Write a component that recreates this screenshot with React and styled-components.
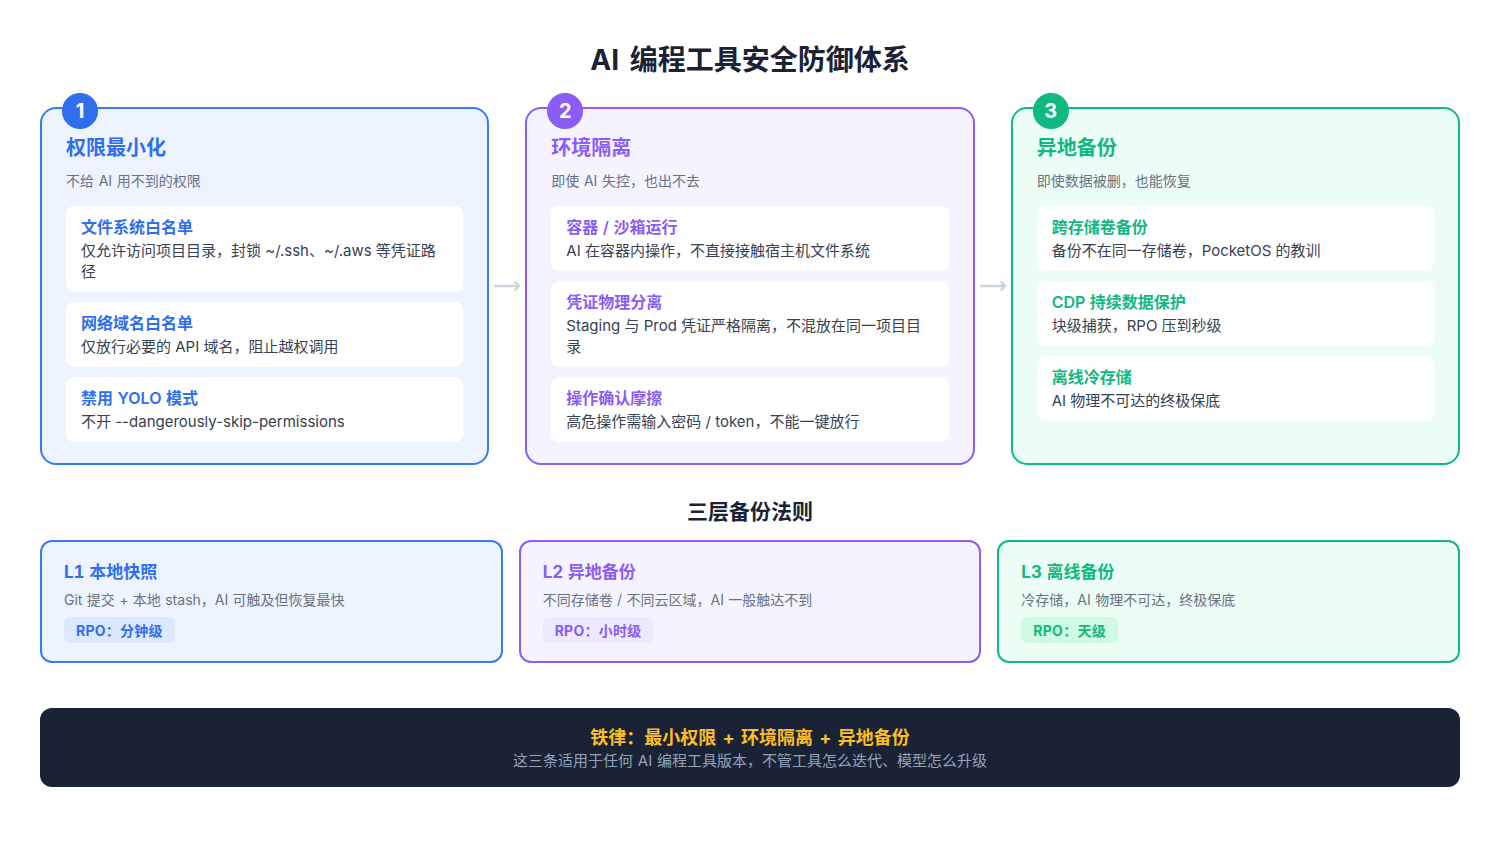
import React from "react";
import styled, { createGlobalStyle } from "styled-components";

const tones = {
  blue: { main: "#2f6fed", soft: "#edf3ff", tag: "#dbe8fe", border: "#3b7bf0" },
  violet: { main: "#8b5cf6", soft: "#f5f3ff", tag: "#ede9fe", border: "#8b5cf6" },
  green: { main: "#10b981", soft: "#ecfdf5", tag: "#d1fae5", border: "#10b981" },
};

const Global = createGlobalStyle`
  * { box-sizing: border-box; }
  html, body { margin: 0; padding: 0; background: #fff; }
  body { font-family: Inter, "Noto Sans CJK SC", sans-serif; color: #1a2335; }
`;

const Page = styled.div`
  width: 1500px;
  height: 844px;
  padding: 40px 40px 0;
  display: flex;
  flex-direction: column;
`;
const Title = styled.h1`
  margin: 1px 0 26.8px;
  font-size: 28px;
  line-height: 39px;
  font-weight: 700;
  word-spacing: 4px;
  text-align: center;
  color: #1a2335;
`;
const Flow = styled.div`
  display: grid;
  grid-template-columns: 1fr 36px 1fr 36px 1fr;
  height: 358px;
`;
const Card = styled.section`
  position: relative;
  padding: 25px 24px 20px;
  border: 2px solid ${(p) => tones[p.$tone].border};
  border-radius: 16px;
  background: ${(p) => tones[p.$tone].soft};
`;
const Badge = styled.div`
  position: absolute;
  top: -16px;
  left: 20px;
  width: 36px;
  height: 36px;
  border-radius: 50%;
  display: flex;
  align-items: center;
  justify-content: center;
  font-size: 20px;
  font-weight: 700;
  color: #fff;
  background: ${(p) => tones[p.$tone].main};
`;
const CardTitle = styled.h2`
  margin: 0 0 9px;
  font-size: 20px;
  line-height: 28px;
  font-weight: 700;
  color: ${(p) => tones[p.$tone].main};
`;
const CardSub = styled.p`
  margin: 0 0 15px;
  font-size: 14px;
  line-height: 20px;
  word-spacing: 0.7px;
  color: #6b7280;
`;
const Items = styled.div`
  display: flex;
  flex-direction: column;
  gap: 10px;
`;
const Item = styled.div`
  padding: 10px 15px 9.55px;
  background: #fff;
  border-radius: 8px;
`;
const ItemTitle = styled.div`
  margin-bottom: 2px;
  font-size: 16px;
  line-height: 22px;
  font-weight: 600;
  word-spacing: 0.5px;
  color: ${(p) => tones[p.$tone].main};
`;
const ItemText = styled.div`
  font-size: 15px;
  line-height: 21.5px;
  color: #374151;
`;
const Arrow = styled.div`
  display: flex;
  align-items: center;
  justify-content: center;
`;
const SectionTitle = styled.h3`
  margin: 32.6px 0 13.9px;
  font-size: 21px;
  line-height: 29px;
  font-weight: 700;
  text-align: center;
  color: #1a2335;
`;
const Layers = styled.div`
  display: grid;
  grid-template-columns: repeat(3, 1fr);
  gap: 16px;
  height: 123px;
`;
const Layer = styled.div`
  padding: 19px 22px 18px;
  border: 2px solid ${(p) => tones[p.$tone].border};
  border-radius: 12px;
  background: ${(p) => tones[p.$tone].soft};
`;
const LayerTitle = styled.div`
  font-size: 17px;
  line-height: 23px;
  font-weight: 700;
  font-variant-numeric: tabular-nums;
  color: ${(p) => tones[p.$tone].main};
`;
const LayerText = styled.div`
  margin-top: 6px;
  font-size: 14px;
  line-height: 20px;
  word-spacing: 0.45px;
  color: #6b7280;
`;
const Tag = styled.span`
  display: inline-block;
  margin-top: 7px;
  padding: 4px 12px 2px;
  border-radius: 6px;
  font-size: 14px;
  line-height: 20px;
  font-weight: 700;
  letter-spacing: 0.25px;
  color: ${(p) => tones[p.$tone].main};
  background: ${(p) => tones[p.$tone].tag};
`;
const Rule = styled.div`
  margin-top: 44.4px;
  height: 79.6px;
  padding-top: 2px;
  border-radius: 12px;
  background: #1a2335;
  display: flex;
  flex-direction: column;
  align-items: center;
  justify-content: center;
`;
const RuleTitle = styled.div`
  font-size: 18px;
  line-height: 25px;
  font-weight: 700;
  word-spacing: 2px;
  color: #fbbf24;
`;
const RuleText = styled.div`
  font-size: 15px;
  line-height: 21px;
  word-spacing: 0.5px;
  color: #94a3b8;
`;

const columns = [
  {
    tone: "blue", n: 1, title: "权限最小化", sub: "不给 AI 用不到的权限",
    items: [
      ["文件系统白名单", "仅允许访问项目目录，封锁 ~/.ssh、~/.aws 等凭证路径"],
      ["网络域名白名单", "仅放行必要的 API 域名，阻止越权调用"],
      ["禁用 YOLO 模式", "不开 --dangerously-skip-permissions"],
    ],
  },
  {
    tone: "violet", n: 2, title: "环境隔离", sub: "即使 AI 失控，也出不去",
    items: [
      ["容器 / 沙箱运行", "AI 在容器内操作，不直接接触宿主机文件系统"],
      ["凭证物理分离", "Staging 与 Prod 凭证严格隔离，不混放在同一项目目录"],
      ["操作确认摩擦", "高危操作需输入密码 / token，不能一键放行"],
    ],
  },
  {
    tone: "green", n: 3, title: "异地备份", sub: "即使数据被删，也能恢复",
    items: [
      ["跨存储卷备份", "备份不在同一存储卷，PocketOS 的教训"],
      ["CDP 持续数据保护", "块级捕获，RPO 压到秒级"],
      ["离线冷存储", "AI 物理不可达的终极保底"],
    ],
  },
];

const layers = [
  { tone: "blue", title: "L1 本地快照", text: "Git 提交 + 本地 stash，AI 可触及但恢复最快", rpo: "RPO：分钟级" },
  { tone: "violet", title: "L2 异地备份", text: "不同存储卷 / 不同云区域，AI 一般触达不到", rpo: "RPO：小时级" },
  { tone: "green", title: "L3 离线备份", text: "冷存储，AI 物理不可达，终极保底", rpo: "RPO：天级" },
];

const ArrowIcon = () => (
  <svg width="28" height="12" viewBox="0 0 28 12" fill="none" stroke="#cbd5e1" strokeWidth="2.4">
    <path d="M1 6h25M21.5 1.5 26 6l-4.5 4.5" />
  </svg>
);

export default function App() {
  return (
    <Page>
      <Global />
      <Title>AI 编程工具安全防御体系</Title>
      <Flow>
        {columns.map((c, i) => (
          <React.Fragment key={c.n}>
            {i > 0 && <Arrow><ArrowIcon /></Arrow>}
            <Card $tone={c.tone}>
              <Badge $tone={c.tone}>{c.n}</Badge>
              <CardTitle $tone={c.tone}>{c.title}</CardTitle>
              <CardSub>{c.sub}</CardSub>
              <Items>
                {c.items.map(([t, d]) => (
                  <Item key={t}>
                    <ItemTitle $tone={c.tone}>{t}</ItemTitle>
                    <ItemText>{d}</ItemText>
                  </Item>
                ))}
              </Items>
            </Card>
          </React.Fragment>
        ))}
      </Flow>
      <SectionTitle>三层备份法则</SectionTitle>
      <Layers>
        {layers.map((l) => (
          <Layer key={l.title} $tone={l.tone}>
            <LayerTitle $tone={l.tone}>{l.title}</LayerTitle>
            <LayerText>{l.text}</LayerText>
            <Tag $tone={l.tone}>{l.rpo}</Tag>
          </Layer>
        ))}
      </Layers>
      <Rule>
        <RuleTitle>铁律：最小权限 + 环境隔离 + 异地备份</RuleTitle>
        <RuleText>这三条适用于任何 AI 编程工具版本，不管工具怎么迭代、模型怎么升级</RuleText>
      </Rule>
    </Page>
  );
}
